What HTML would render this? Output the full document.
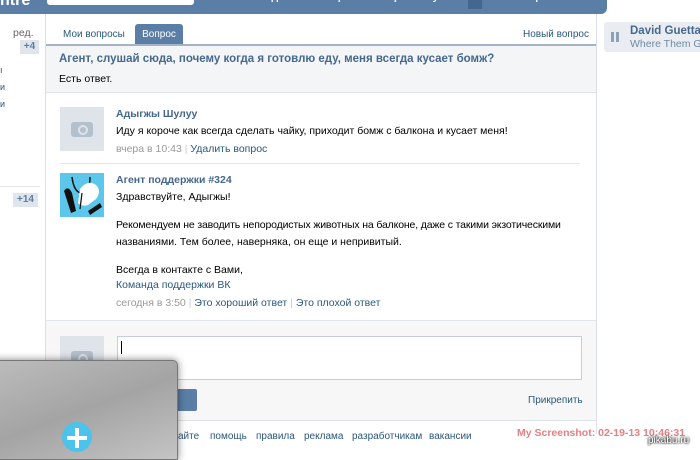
<!DOCTYPE html>
<html><head><meta charset="utf-8"><style>
*{margin:0;padding:0;box-sizing:border-box}
body{width:700px;height:450px;overflow:hidden;background:#fff;font-family:"Liberation Sans","Noto Sans CJK SC",sans-serif;font-size:10.5px;color:#000;position:relative}
.a{position:absolute;white-space:nowrap}
.grey{color:#999}
.lnk{color:#2b587a}
.cam{position:absolute;width:44px;height:44px;background:#dfe4ea}
.cam:before{content:"";position:absolute;left:11px;top:15px;width:22px;height:15px;background:#b3c0cd;border-radius:3px}
.cam:after{content:"";position:absolute;left:18px;top:18px;width:6px;height:6px;border:2px solid #dfe4ea;border-radius:50%}
</style></head><body>
<div class="a" style="left:0;top:0;width:607px;height:14px;background:#5b7ea6;border-bottom-right-radius:6px"></div>
<div class="a" style="left:0;top:-8px;color:#fff;font-weight:bold;font-size:16px">ntre</div>
<div class="a" style="left:47px;top:0;width:147px;height:5px;background:#fff;border-radius:0 0 3px 3px"></div>
<div class="a" style="left:256px;top:-9px;color:#fff;font-weight:bold">люди</div>
<div class="a" style="left:306px;top:-9px;color:#fff;font-weight:bold">сообщества</div>
<div class="a" style="left:383px;top:-9px;color:#fff;font-weight:bold">игры</div>
<div class="a" style="left:425px;top:-9px;color:#fff;font-weight:bold">музыка</div>
<div class="a" style="left:468px;top:0;width:14px;height:9px;background:#44678f"></div>
<div class="a" style="left:502px;top:-9px;color:#fff;font-weight:bold">помощь</div>
<div class="a" style="left:562px;top:-9px;color:#fff;font-weight:bold">выйти</div>

<div class="a" style="left:13px;top:27px;color:#666">ред.</div>
<div class="a" style="left:20px;top:40px;width:19px;height:14px;background:#dfe5eb;color:#5b7ea6;font-weight:bold;font-size:10px;text-align:center;line-height:14px">+4</div>
<div class="a" style="left:13px;top:193px;width:25px;height:14px;background:#dfe5eb;color:#5b7ea6;font-weight:bold;font-size:10px;text-align:center;line-height:14px">+14</div>
<div class="a" style="left:0;top:186px;width:40px;height:1px;background:#e5e5e5"></div>
<div class="a" style="left:0;top:62px;color:#2b587a;line-height:17px;font-size:9px">ı<br>и<br>и</div>

<div class="a" style="left:45px;top:14px;width:1px;height:436px;background:#dbe0e6"></div>
<div class="a" style="left:596px;top:14px;width:1px;height:420px;background:#dbe0e6"></div>

<div class="a" style="left:63px;top:29px;color:#2b587a;font-size:10px">Мои вопросы</div>
<div class="a" style="left:135px;top:24px;width:48px;height:21px;background:#5b7ea6;border-radius:3px 3px 0 0;color:#fff;text-align:center;line-height:21px;font-size:10px">Вопрос</div>
<div class="a" style="left:523px;top:29px;color:#2b587a;font-size:10px">Новый вопрос</div>
<div class="a" style="left:46px;top:44px;width:550px;height:2px;background:#a4b4c6"></div>
<div class="a" style="left:46px;top:46px;width:550px;height:47px;background:#f4f5f7;border-bottom:1px solid #e0e4e8"></div>
<div class="a" style="left:59px;top:53px;color:#45688e;font-weight:bold;font-size:11.5px">Агент, слушай сюда, почему когда я готовлю еду, меня всегда кусает бомж?</div>
<div class="a" style="left:59px;top:73px">Есть ответ.</div>

<div class="cam" style="left:60px;top:107px"></div>
<div class="a" style="left:116px;top:108px;color:#45688e;font-weight:bold">Адыгжы Шулуу</div>
<div class="a" style="left:116px;top:125px">Иду я короче как всегда сделать чайку, приходит бомж с балкона и кусает меня!</div>
<div class="a" style="left:116px;top:143px"><span class="grey">вчера в 10:43</span> <span style="color:#c5cdd6">|</span> <span class="lnk">Удалить вопрос</span></div>
<div class="a" style="left:60px;top:163px;width:520px;height:1px;background:#e5e8ec"></div>

<div class="a" style="left:60px;top:173px;width:44px;height:44px;background:#5cc7ea;overflow:hidden">
<svg width="44" height="44" viewBox="0 0 44 44"><path d="M12 4 Q14 20 22 20 Q30 20 30 4" stroke="#111" stroke-width="1.5" fill="none"/><path d="M20 16 Q28 6 36 12 Q42 18 36 26 L28 32 Q22 34 18 30Z" fill="#fff"/><path d="M4 18 Q8 12 12 20 L16 38 L11 40Z" fill="#111"/><path d="M28 38 L40 30 L42 34 L30 42Z" fill="#111"/><path d="M22 20 L20 36" stroke="#111" stroke-width="1.2"/></svg></div>
<div class="a" style="left:116px;top:174px;color:#45688e;font-weight:bold">Агент поддержки #324</div>
<div class="a" style="left:116px;top:191px">Здравствуйте, Адыгжы!</div>
<div class="a" style="left:116px;top:219px;letter-spacing:-0.15px">Рекомендуем не заводить непородистых животных на балконе, даже с такими экзотическими</div>
<div class="a" style="left:116px;top:236px">названиями. Тем более, наверняка, он еще и непривитый.</div>
<div class="a" style="left:116px;top:264px">Всегда в контакте с Вами,</div>
<div class="a" style="left:116px;top:279px;color:#2b587a">Команда поддержки ВК</div>
<div class="a" style="left:116px;top:297px"><span class="grey">сегодня в 3:50</span> <span style="color:#c5cdd6">|</span> <span class="lnk">Это хороший ответ</span> <span style="color:#c5cdd6">|</span> <span class="lnk">Это плохой ответ</span></div>

<div class="a" style="left:46px;top:320px;width:550px;height:1px;background:#e3e6ea"></div>
<div class="a" style="left:46px;top:321px;width:550px;height:100px;background:#f7f7f7;border-bottom:1px solid #e0e3e7"></div>
<div class="cam" style="left:60px;top:336px"></div>
<div class="a" style="left:117px;top:336px;width:465px;height:44px;background:#fff;border:1px solid #c5ced8"></div>
<div class="a" style="left:121px;top:341px;width:1px;height:13px;background:#000"></div>
<div class="a" style="left:150px;top:389px;width:47px;height:22px;background:#5b7ea6;border-radius:2px"></div>
<div class="a" style="left:528px;top:395px;color:#2b587a;font-size:10px">Прикрепить</div>

<div class="a" style="left:178px;top:431px;color:#2b587a;font-size:10px">айте</div>
<div class="a" style="left:210px;top:431px;color:#2b587a;font-size:10px">помощь</div>
<div class="a" style="left:256px;top:431px;color:#2b587a;font-size:10px">правила</div>
<div class="a" style="left:304px;top:431px;color:#2b587a;font-size:10px">реклама</div>
<div class="a" style="left:352px;top:431px;color:#2b587a;font-size:10px">разработчикам</div>
<div class="a" style="left:429px;top:431px;color:#2b587a;font-size:10px">вакансии</div>
<div class="a" style="left:517px;top:427px;color:#e47f82;font-weight:bold;font-size:10.5px">My Screenshot: 02-19-13 10:46:31</div>
<div class="a" style="left:648px;top:435px;color:#fff;font-size:10px;text-shadow:0 0 2px #000,0 0 2px #000">pikabu.ru</div>

<div class="a" style="left:604px;top:22px;width:96px;height:30px;background:#e9edf2;border-radius:3px 0 0 3px"></div>
<div class="a" style="left:611px;top:32px;width:3px;height:10px;background:#8ea3bb;box-shadow:5px 0 0 #8ea3bb"></div>
<div class="a" style="left:630px;top:25px;color:#45688e;font-weight:bold;font-size:11.5px">David Guetta</div>
<div class="a" style="left:630px;top:38px;color:#6f8aa8">Where Them Girls</div>

<div class="a" style="left:-10px;top:360px;width:188px;height:100px;background:linear-gradient(160deg,#bcbcbc,#a4a4a4 50%,#c4c4c4);border:1px solid #777;border-radius:0 5px 0 0;box-shadow:0 0 8px rgba(0,0,0,.5)"></div>
<div class="a" style="left:62px;top:422px;width:30px;height:30px;border-radius:50%;background:#4cc3ea"></div>
<div class="a" style="left:75px;top:428px;width:4px;height:20px;background:#fff"></div>
<div class="a" style="left:67px;top:436px;width:20px;height:4px;background:#fff"></div>
</body></html>
